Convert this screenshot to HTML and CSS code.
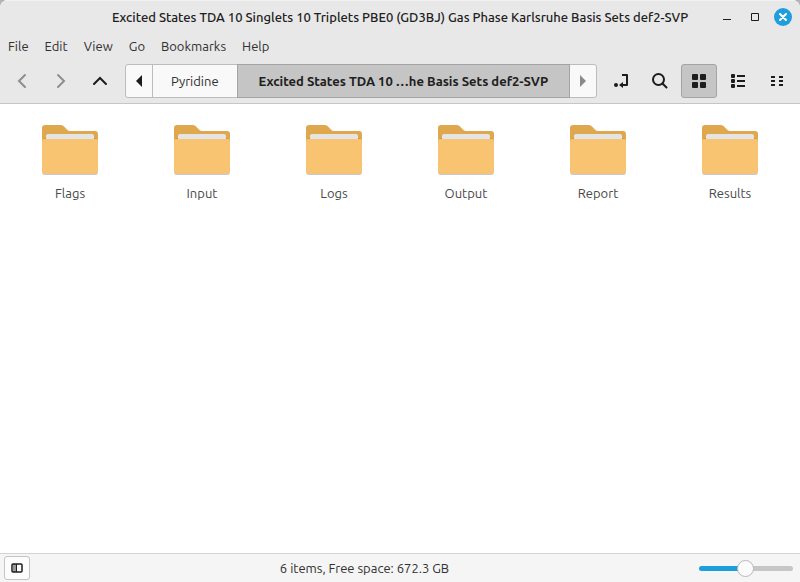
FILE: index.html
```
<!DOCTYPE html>
<html lang="en">
<head>
<meta charset="utf-8">
<title>Excited States TDA 10 Singlets 10 Triplets PBE0 (GD3BJ) Gas Phase Karlsruhe Basis Sets def2-SVP</title>
<link rel="stylesheet" href="styles.css">
</head>
<body>
<svg class="defs" width="0" height="0" aria-hidden="true">
  <symbol id="folder" viewBox="0 0 56 50">
    <path fill="#c9c9c9" d="M0 40h56v7a3 3 0 0 1-3 3H3a3 3 0 0 1-3-3z"/>
    <path fill="#e0a84e" d="M0 3a3 3 0 0 1 3-3h15c2 0 3 .5 4 1.500l3 3c1 1 2 1.500 4 1.500h24a3 3 0 0 1 3 3v12H0z"/>
    <path fill="#c08f42" d="M0 16l3-3h50l3 3v3H0z"/>
    <path fill="#e4e4e4" d="M4 11a2 2 0 0 1 2-2h44a2 2 0 0 1 2 2v6H4z"/>
    <path fill="#f8c471" d="M0 16a2 2 0 0 1 2-2h52a2 2 0 0 1 2 2v30a3 3 0 0 1-3 3H3a3 3 0 0 1-3-3z"/>
  </symbol>
</svg>
<div class="window">
  <header class="titlebar">
    <h1 class="title">Excited States TDA 10 Singlets 10 Triplets PBE0 (GD3BJ) Gas Phase Karlsruhe Basis Sets def2-SVP</h1>
    <div class="controls">
      <button class="control" aria-label="Minimize"><svg width="18" height="18"><path d="M5 11.500h8" stroke="#1c1c1c"/></svg></button>
      <button class="control" aria-label="Maximize"><svg width="18" height="18"><path d="M5.500 5.500h7v7h-7z" fill="none" stroke="#1c1c1c"/></svg></button>
      <button class="control" aria-label="Close"><svg width="18" height="18"><circle cx="9" cy="9" r="9" fill="#1f9ede"/><path d="M6 6l6 6M12 6l-6 6" stroke="#fff" stroke-width="2" stroke-linecap="round"/></svg></button>
    </div>
  </header>
  <nav class="menubar" aria-label="Menu">
    <button class="menu">File</button>
    <button class="menu">Edit</button>
    <button class="menu">View</button>
    <button class="menu">Go</button>
    <button class="menu">Bookmarks</button>
    <button class="menu">Help</button>
  </nav>
  <div class="toolbar">
    <div class="group">
      <button class="tool" aria-label="Back" disabled><svg width="16" height="16"><path d="M11 2L5 8l6 6" fill="none" stroke="#8e8e8e" stroke-width="2" stroke-linecap="round"/></svg></button>
      <button class="tool" aria-label="Forward" disabled><svg width="16" height="16"><path d="M5 2l6 6-6 6" fill="none" stroke="#8e8e8e" stroke-width="2" stroke-linecap="round"/></svg></button>
      <button class="tool" aria-label="Up"><svg width="16" height="16"><path d="M2 11l6-6 6 6" fill="none" stroke="#1c1c1c" stroke-width="2" stroke-linecap="round"/></svg></button>
    </div>
    <nav class="path" aria-label="Path">
      <button class="step" aria-label="Scroll left"><svg width="6" height="12"><path d="M6 0v12L0 6z" fill="#1c1c1c"/></svg></button>
      <button class="crumb">Pyridine</button>
      <button class="crumb current" aria-current="page">Excited States TDA 10 …he Basis Sets def2-SVP</button>
      <button class="step" aria-label="Scroll right" disabled><svg width="6" height="12"><path d="M0 0v12l6-6z" fill="#8a8a8a"/></svg></button>
    </nav>
    <div class="group">
      <button class="tool" aria-label="Toggle location entry"><svg width="16" height="16"><circle cx="3" cy="12" r="2" fill="#1c1c1c"/><path d="M9 2h5v10H8" fill="none" stroke="#1c1c1c" stroke-width="2" stroke-linejoin="round"/><path d="M10 9v6l-4-3z" fill="#1c1c1c"/></svg></button>
      <button class="tool" aria-label="Search"><svg width="16" height="16"><circle cx="6.500" cy="6.500" r="5.500" fill="none" stroke="#1c1c1c" stroke-width="2"/><path d="M10.500 10.500l4 4" stroke="#1c1c1c" stroke-width="2" stroke-linecap="round"/></svg></button>
      <button class="tool active" aria-label="Icon view" aria-pressed="true"><svg width="16" height="16" fill="#1c1c1c"><rect x="1" y="1" width="6" height="6" rx="1"/><rect x="9" y="1" width="6" height="6" rx="1"/><rect x="1" y="9" width="6" height="6" rx="1"/><rect x="9" y="9" width="6" height="6" rx="1"/></svg></button>
      <button class="tool" aria-label="List view"><svg width="16" height="16" fill="#1c1c1c"><rect x="1" y="1" width="4" height="4" rx="1"/><rect x="1" y="6" width="4" height="4" rx="1"/><rect x="1" y="11" width="4" height="4" rx="1"/><path d="M7 2h8v2H7zM7 7h8v2H7zM7 12h8v2H7z"/></svg></button>
      <button class="tool" aria-label="Compact view"><svg width="16" height="16"><path d="M2 4h4M2 8h4M2 12h4M10 4h4M10 8h4M10 12h4" stroke="#1c1c1c" stroke-width="2"/></svg></button>
    </div>
  </div>
  <main class="files">
    <a class="file" href="#flags"><svg class="folder"><use href="#folder"/></svg><span>Flags</span></a>
    <a class="file" href="#input"><svg class="folder"><use href="#folder"/></svg><span>Input</span></a>
    <a class="file" href="#logs"><svg class="folder"><use href="#folder"/></svg><span>Logs</span></a>
    <a class="file" href="#output"><svg class="folder"><use href="#folder"/></svg><span>Output</span></a>
    <a class="file" href="#report"><svg class="folder"><use href="#folder"/></svg><span>Report</span></a>
    <a class="file" href="#results"><svg class="folder"><use href="#folder"/></svg><span>Results</span></a>
  </main>
  <footer class="statusbar">
    <button class="sidebar-toggle" aria-label="Show sidebar"><svg width="12" height="12"><path d="M2 2h3v8H2z" fill="#999"/><rect x="1" y="2" width="10" height="8" rx="1" fill="none" stroke="#1c1c1c" stroke-width="1.500"/><path d="M5.500 2v8" stroke="#1c1c1c"/></svg></button>
    <p class="status">6 items, Free space: 672.3 GB</p>
    <input class="zoom" type="range" min="0" max="100" value="49" aria-label="Zoom">
  </footer>
</div>
</body>
</html>
```
FILE: styles.css
```
* {
  box-sizing: border-box;
}

body {
  margin: 0;
  background: #b4b4b4;
  color: #303030;
  font: 13px/18px Ubuntu, "Noto Sans", sans-serif;
}

button {
  margin: 0;
  padding: 0;
  border: 0;
  background: none;
  color: inherit;
  font: inherit;
}

svg {
  display: block;
}

.defs {
  position: absolute;
}

.window {
  display: flex;
  flex-direction: column;
  min-height: 100vh;
  overflow: hidden;
  border-radius: 8px 8px 0 0;
  background: #fff;
}

.titlebar {
  display: grid;
  grid-template-columns: 1fr auto 1fr;
  align-items: center;
  height: 32px;
  padding: 0 8px;
  border-top: 1px solid #f2f2f2;
  background: #e8e8e8;
}

.title {
  grid-column: 2;
  margin: 0;
  color: #202020;
  font-size: 13px;
  font-weight: 500;
  white-space: nowrap;
}

.controls {
  display: flex;
  justify-content: flex-end;
  gap: 10px;
}

.menubar {
  display: flex;
  gap: 16px;
  height: 28px;
  padding: 0 8px;
  background: #e8e8e8;
}

.toolbar {
  display: flex;
  align-items: center;
  gap: 6px;
  height: 44px;
  padding: 0 5px 2px 4px;
  border-bottom: 1px solid #c6c6c6;
  background: #e8e8e8;
}

.group {
  display: flex;
  gap: 3px;
}

.tool {
  display: grid;
  place-items: center;
  width: 36px;
  height: 34px;
  border: 1px solid transparent;
  border-radius: 3px;
}

.tool.active {
  border-color: #a4a4a4;
  background: #c5c5c5;
}

.path {
  display: flex;
  flex: 1;
  min-width: 0;
  height: 34px;
  margin-left: 1px;
  border: 1px solid #bcbcbc;
  border-radius: 3px;
  background: #f9f9f9;
}

.step {
  display: grid;
  flex: none;
  place-items: center;
  width: 26px;
}

.crumb {
  flex: none;
  padding: 0 18px;
  border-left: 1px solid #bcbcbc;
  white-space: nowrap;
}

.crumb.current {
  flex: 1;
  min-width: 0;
  margin: -1px 0;
  padding: 0;
  border: 1px solid #a4a4a4;
  background: #c5c5c5;
  color: #202020;
  font-weight: 700;
}

.files {
  display: grid;
  flex: 1;
  grid-template-columns: repeat(auto-fill, minmax(132px, 1fr));
  align-content: start;
  padding: 21px 4px;
}

.file {
  display: flex;
  flex-direction: column;
  align-items: center;
  gap: 9px;
  color: #484848;
  text-decoration: none;
}

.folder {
  width: 56px;
  height: 50px;
}

.statusbar {
  display: flex;
  align-items: center;
  height: 29px;
  padding: 0 7px 0 4px;
  border-top: 1px solid #d4d4d4;
  background: #f5f5f5;
}

.sidebar-toggle {
  display: grid;
  place-items: center;
  width: 26px;
  height: 24px;
  border: 1px solid #c4c4c4;
  border-radius: 3px;
  background: #fcfcfc;
}

.status {
  flex: 1;
  margin: 0;
  text-align: center;
}

.zoom {
  width: 94px;
  height: 18px;
  margin: 0;
  appearance: none;
  background: none;
}

.zoom::-webkit-slider-runnable-track {
  height: 5px;
  border-radius: 3px;
  background: linear-gradient(to right, #1f9ede 49%, #c6c6c6 49%);
}

.zoom::-webkit-slider-thumb {
  width: 17px;
  height: 17px;
  margin-top: -6px;
  appearance: none;
  border: 1px solid #b8b8b8;
  border-radius: 50%;
  background: #fcfcfc;
}
```
